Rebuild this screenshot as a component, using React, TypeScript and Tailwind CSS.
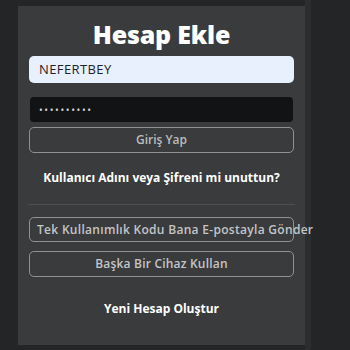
export default function App() {
    return (
        <div className="w-[350px] h-[350px] bg-[#232527] overflow-hidden relative" style={{ fontFamily: '"Open Sans", "Liberation Sans", sans-serif' }}>
            <div className="absolute left-[305px] top-0 w-[6px] h-full bg-[#2b2d2f]" />
            <div className="relative ml-[18px] mt-[6px] w-[287px] h-[339px] bg-[#393b3d] px-[11px] pt-[13px] flex flex-col">
                <h1 className="text-center text-[25px] leading-[30px] font-extrabold text-white tracking-[-0.2px]">
                    Hesap Ekle
                </h1>
                <div className="mt-[7px] h-[27px] rounded-[5px] bg-[#e8f0fe] flex items-center pl-[10px] text-[13px] tracking-[0.4px] text-[#1f2229]">
                    NEFERTBEY
                </div>
                <div className="mt-[14px] mx-[1px] h-[25px] rounded-[4px] bg-[#121314] flex items-center pl-[9px] text-[10px] text-[#d5d5d5] tracking-[1.6px] leading-none">
                    ••••••••••
                </div>
                <div className="mt-[5px] h-[26px] rounded-[5px] border border-[#8f9193] flex items-center justify-center text-[12px] font-semibold text-[#bcbdbe]">
                    Giriş Yap
                </div>
                <div className="mt-[16px] text-center text-[12px] font-bold text-white leading-[18px]">
                    Kullanıcı Adını veya Şifreni mi unuttun?
                </div>
                <div className="mt-[17px] h-px bg-[#4d4f51] -mx-[1px]" />
                <div className="mt-[12px] h-[25px] rounded-[5px] border border-[#8f9193] flex items-center pl-[7px] text-[12px] font-semibold text-[#c4c5c6] tracking-[0.3px] whitespace-nowrap overflow-visible">
                    Tek Kullanımlık Kodu Bana E-postayla Gönder
                </div>
                <div className="mt-[9px] h-[26px] rounded-[5px] border border-[#8f9193] flex items-center justify-center text-[12px] font-semibold text-[#c4c5c6] tracking-[0.2px]">
                    Başka Bir Cihaz Kullan
                </div>
                <div className="mt-[23px] text-center text-[12px] font-bold text-white leading-[18px]">
                    Yeni Hesap Oluştur
                </div>
            </div>
        </div>
    );
}
